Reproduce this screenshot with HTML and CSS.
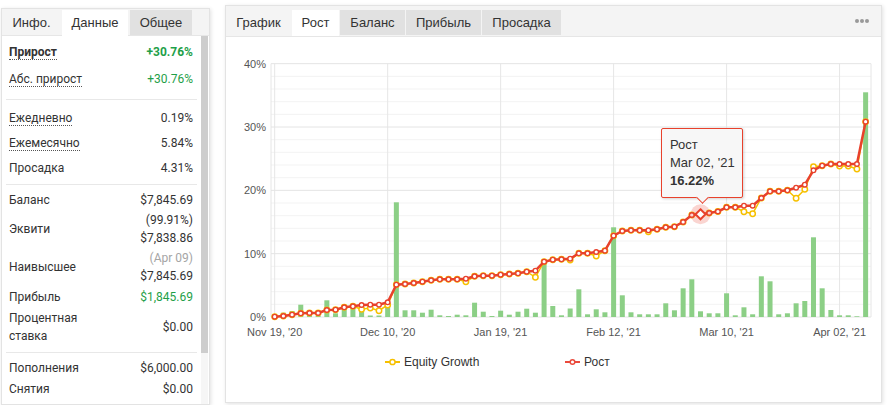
FILE: index.html
```html
<!DOCTYPE html>
<html lang="ru">
<head>
  <meta charset="UTF-8">
  <title>Рост</title>
  <link rel="stylesheet" href="styles.css">
</head>
<body>
<div class="page">
  <div class="stats">
    <div class="tabs">
      <span class="tab w59">Инфо.</span>
      <span class="tab active w66">Данные</span>
      <span class="tab grey w62">Общее</span>
    </div>
    <div class="stats-body">
      <div class="list">
        <div class="sec sec-top">
          <div class="row"><span class="lbl"><span class="dotted strong">Прирост</span></span><span class="val green strong">+30.76%</span></div>
          <div class="row"><span class="lbl"><span class="dotted">Абс. прирост</span></span><span class="val green">+30.76%</span></div>
        </div>
        <div class="sec sec-rates">
          <div class="row"><span class="lbl"><span class="dotted">Ежедневно</span></span><span class="val">0.19%</span></div>
          <div class="row"><span class="lbl"><span class="dotted">Ежемесячно</span></span><span class="val">5.84%</span></div>
          <div class="row"><span class="lbl">Просадка</span><span class="val">4.31%</span></div>
        </div>
        <div class="sec sec-money">
          <div class="row"><span class="lbl">Баланс</span><span class="val">$7,845.69</span></div>
          <div class="row"><span class="lbl">Эквити</span><span class="val">(99.91%)<br>$7,838.86</span></div>
          <div class="row"><span class="lbl">Наивысшее</span><span class="val"><span class="muted">(Apr 09)</span><br>$7,845.69</span></div>
          <div class="row tall"><span class="lbl">Прибыль</span><span class="val green">$1,845.69</span></div>
          <div class="row"><span class="lbl">Процентная ставка</span><span class="val">$0.00</span></div>
        </div>
        <div class="sec sec-flow">
          <div class="row"><span class="lbl">Пополнения</span><span class="val">$6,000.00</span></div>
          <div class="row"><span class="lbl">Снятия</span><span class="val">$0.00</span></div>
        </div>
      </div>
      <div class="scrollbar"><div class="thumb"></div></div>
    </div>
  </div>

  <div class="card">
    <div class="tabs tabs-chart">
      <span class="tab w65">График</span>
      <span class="tab active w47">Рост</span>
      <span class="tab grey w65">Баланс</span>
      <span class="tab grey w75">Прибыль</span>
      <span class="tab grey w79">Просадка</span>
      <span class="menu"><i></i><i></i><i></i></span>
    </div>
    <div class="chart">
      <svg id="plot" class="plot" viewBox="226 37 655 365" width="655" height="365">
        <g id="grid"></g>
        <g class="ylab">
          <text x="266" y="67.7">40%</text>
          <text x="266" y="131">30%</text>
          <text x="266" y="194.3">20%</text>
          <text x="266" y="257.7">10%</text>
          <text x="266" y="321">0%</text>
        </g>
        <g class="xlab">
          <text x="274.7" y="336">Nov 19, '20</text>
          <text x="387.7" y="336">Dec 10, '20</text>
          <text x="500.6" y="336">Jan 19, '21</text>
          <text x="613.6" y="336">Feb 12, '21</text>
          <text x="726.6" y="336">Mar 10, '21</text>
          <text x="839.6" y="336">Apr 02, '21</text>
        </g>
        <g id="series"></g>
        <g class="legend">
          <line x1="385" y1="362" x2="400" y2="362" stroke="#f6c000" stroke-width="2"/>
          <circle cx="392.5" cy="362" r="2.6" fill="#fff" stroke="#f6c000" stroke-width="1.5"/>
          <text x="404" y="366">Equity Growth</text>
          <line x1="565" y1="362" x2="580" y2="362" stroke="#ea4a3c" stroke-width="2"/>
          <circle cx="572.5" cy="362" r="2.3" fill="#fff" stroke="#ea4a3c" stroke-width="1.5"/>
          <text x="584" y="366">Рост</text>
        </g>
      </svg>
      <div class="tip">
        <div>Рост</div>
        <div>Mar 02, '21</div>
        <div class="tip-val">16.22%</div>
      </div>
    </div>
  </div>
</div>
<script src="script.js"></script>
</body>
</html>
```

FILE: styles.css
```css
* { box-sizing: border-box; margin: 0; padding: 0; }
body { background: #fff; color: #333; font-family: "Liberation Sans", Arial, sans-serif; }

.page {
  display: flex;
  align-items: flex-start;
  gap: 15px;
  padding: 5px 0 0 1px;
}

/* tabs shared by both panels */
.tabs {
  display: flex;
  background: #f4f4f4;
  border-bottom: 1px solid #e6e6e6;
  padding-top: 1px;
}
.tab {
  height: 25px;
  line-height: 25px;
  text-align: center;
  font-size: 13px;
  color: #333;
  margin-right: 1px;
}
.tab.grey { background: #e1e1e1; }
.tab.active { background: #fff; height: 26px; margin-bottom: -1px; }
.w47 { width: 47px; }
.w59 { width: 59px; }
.w62 { width: 62px; margin-left: 1px; }
.w65 { width: 65px; }
.w66 { width: 66px; }
.w75 { width: 75px; }
.w79 { width: 79px; }

/* left stats panel */
.stats {
  width: 209px;
  height: 397px;
  margin-top: 3px;
  border: 1px solid #e3e3e3;
  box-shadow: 1px 1px 4px rgba(0, 0, 0, .12);
  overflow: hidden;
}
.stats-body { display: flex; height: 370px; }
.list { flex: 1; font-family: Roboto, "Liberation Sans", sans-serif; font-size: 12px; }
.scrollbar { width: 7px; margin-right: 1px; background: #f6f6f6; }
.thumb { height: 317px; background: #cdcdcd; }

.sec { margin: 0 4px; border-bottom: 1px solid #e8e8e8; }
.sec:last-child { border-bottom: 0; }
.row {
  display: flex;
  align-items: center;
  justify-content: space-between;
  padding: 1px 4px 1px 3px;
  line-height: 18px;
}
.lbl { max-width: 95px; }
.val { text-align: right; }
.dotted { border-bottom: 1px dotted #555; }
.strong { font-weight: 700; }
.green { color: #1f9f49; }
.muted { color: #a5a5a5; }

.sec-top { padding: 3px 0 6px; }
.sec-top .row { padding-top: 4px; padding-bottom: 4px; line-height: 19px; }
.sec-rates { padding: 6px 0 3px; }
.sec-rates .row { padding-top: 4px; padding-bottom: 4px; line-height: 17px; }
.sec-money { padding: 5px 0 6px; }
.sec-money .row.tall { padding-top: 2px; padding-bottom: 2px; }
.sec-flow { padding-top: 4px; }
.sec-flow .row { padding-top: 1.5px; padding-bottom: 1.5px; }

/* chart card */
.card {
  width: 657px;
  height: 398px;
  border: 1px solid #e3e3e3;
  box-shadow: 1px 1px 4px rgba(0, 0, 0, .12);
}
.tabs-chart { height: 31px; padding-top: 4px; }
.menu {
  display: flex;
  gap: 1px;
  align-self: center;
  margin: -4px 12px 0 auto;
}
.menu i { width: 4px; height: 4px; border-radius: 50%; background: #999; }

.chart { position: relative; height: 365px; }
.plot { display: block; }
.ylab text { font-size: 11px; fill: #555; text-anchor: end; }
.xlab text { font-size: 11px; fill: #555; text-anchor: middle; }
.legend text { font-size: 12px; fill: #333; }

.tip {
  position: absolute;
  left: 435px;
  top: 91px;
  width: 82px;
  height: 70px;
  padding: 7px 0 0 8px;
  background: #f7f7f7;
  border: 1px solid #e8412c;
  border-radius: 2px;
  box-shadow: 1px 1px 3px rgba(0, 0, 0, .18);
  font-size: 13px;
  line-height: 18px;
  color: #333;
}
.tip::after {
  content: "";
  position: absolute;
  left: 36px;
  bottom: -5px;
  width: 8px;
  height: 8px;
  background: #f7f7f7;
  border-right: 1px solid #e8412c;
  border-bottom: 1px solid #e8412c;
  transform: rotate(45deg);
}
.tip-val { font-weight: 700; }
```

FILE: script.js
```js
var X0 = 274.7, DX = 8.69, BASE = 317, STEP = 6.333;
var RED = '#e8412c', YEL = '#f6c000', BAR = '#8ccf86';

var red = [316.7, 316, 314.7, 313.3, 313, 313, 310, 309.7, 307.3, 306.3, 305, 304.7, 304.7, 302.3,
  284.7, 284, 283, 281.7, 280.3, 279.3, 279.3, 279.3, 278.7, 276.3, 275.7, 275.7, 274.7, 274, 273.3,
  271.7, 270.7, 261.7, 259.7, 259.3, 258.7, 253.3, 253.3, 252, 250.7, 235.7, 231, 230.3, 230.3, 230.3,
  229.3, 227.3, 226.7, 222, 215, 214.3, 213, 211.5, 207.3, 207.3, 205.7, 205.7, 198, 191.3, 191.3,
  190.3, 187.7, 184.7, 170.3, 165.7, 164, 164, 164, 164, 121.7];

var yelDiff = { 10: 309.3, 11: 308, 12: 310.7, 13: 305, 22: 281.7, 30: 277.3, 34: 260, 37: 256,
  43: 231.7, 54: 211.7, 55: 213.7, 60: 198.3, 61: 189.3, 62: 166.7, 65: 166, 66: 166, 67: 169 };

var bars = [0, 4.3, 6, 12.3, 2, 1, 16.7, 3.7, 8.3, 8.7, 9, 1.5, 1.5, 11.3, 114.7, 6.7, 6.7, 4.3, 7.3,
  1.7, 1, 2.3, 1.7, 14.3, 5.3, 1, 6.3, 2.3, 5.3, 8.3, 4.3, 54.3, 11, 1.7, 8.5, 27.7, 2.7, 7.7, 4.7,
  89.7, 21.7, 4.7, 2.7, 2.7, 2.7, 13.7, 6.7, 28.7, 37.7, 5.7, 3.7, 3.7, 23.7, 1.7, 9.7, 2.7, 40.7,
  35.7, 2.7, 3.7, 13.7, 16, 79.7, 28.7, 7, 1.7, 1.7, 0.7, 224.7];

var HOVER = 49;

function xAt(i) { return X0 + i * DX; }

var grid = '';
for (var k = 1; k < 20; k++) {
  if (k % 5) {
    var y = BASE - k * 2 * STEP;
    grid += '<line x1="271" x2="871" y1="' + y + '" y2="' + y + '" stroke="#f3f3f3"/>';
  }
}
for (var j = 0; j < 6; j++) {
  var x = xAt(13 * j);
  grid += '<line x1="' + x + '" x2="' + x + '" y1="63.7" y2="317" stroke="#e6e6e6"/>';
}
grid += '<line x1="271" x2="271" y1="63.7" y2="317" stroke="#e6e6e6"/>';
grid += '<line x1="871" x2="871" y1="63.7" y2="317" stroke="#e6e6e6"/>';
for (var m = 0; m <= 4; m++) {
  var ym = BASE - m * 10 * STEP;
  grid += '<line x1="271" x2="871" y1="' + ym + '" y2="' + ym + '" stroke="#e4e4e4"/>';
}
document.getElementById('grid').innerHTML = grid;

var s = '';
bars.forEach(function (h, i) {
  if (h > 0) s += '<rect x="' + (xAt(i) - 2.5) + '" y="' + (BASE - h) + '" width="5" height="' + h + '" fill="' + BAR + '"/>';
});

var yel = red.map(function (v, i) { return yelDiff[i] !== undefined ? yelDiff[i] : v; });
var ypts = yel.map(function (v, i) { return xAt(i) + ',' + v; }).join(' ');
s += '<polyline points="' + ypts + '" fill="none" stroke="' + YEL + '" stroke-width="1.5"/>';
yel.forEach(function (v, i) {
  s += '<circle cx="' + xAt(i) + '" cy="' + v + '" r="2.7" fill="#fff" stroke="' + YEL + '" stroke-width="1.5"/>';
});

var rpts = red.map(function (v, i) { return xAt(i) + ',' + v; }).join(' ');
s += '<polyline points="' + rpts + '" fill="none" stroke="' + RED + '" stroke-width="2.5" stroke-linejoin="round"/>';
red.forEach(function (v, i) {
  if (i === HOVER) return;
  s += '<circle cx="' + xAt(i) + '" cy="' + v + '" r="2.3" fill="#fff" stroke="' + RED + '" stroke-width="1.4"/>';
});

var hx = xAt(HOVER), hy = red[HOVER];
s += '<circle cx="' + hx + '" cy="' + hy + '" r="10" fill="' + RED + '" fill-opacity="0.22"/>';
s += '<polygon points="' + hx + ',' + (hy - 5) + ' ' + (hx + 5) + ',' + hy + ' ' + hx + ',' + (hy + 5) + ' ' + (hx - 5) + ',' + hy +
  '" fill="#fff" stroke="' + RED + '" stroke-width="2"/>';

document.getElementById('series').innerHTML = s;
```
